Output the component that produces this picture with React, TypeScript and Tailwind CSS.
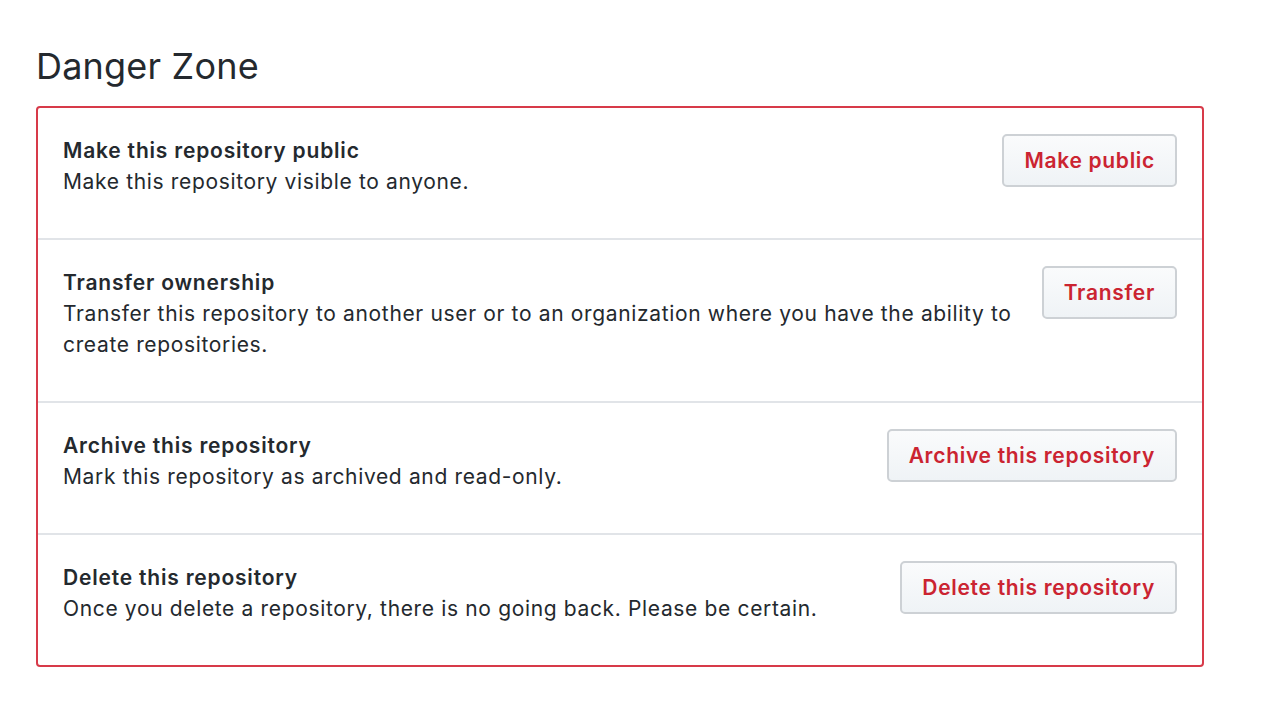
const rows = [
  {
    title: "Make this repository public",
    desc: "Make this repository visible to anyone.",
    button: "Make public",
  },
  {
    title: "Transfer ownership",
    desc: "Transfer this repository to another user or to an organization where you have the ability to create repositories.",
    button: "Transfer",
  },
  {
    title: "Archive this repository",
    desc: "Mark this repository as archived and read-only.",
    button: "Archive this repository",
  },
  {
    title: "Delete this repository",
    desc: "Once you delete a repository, there is no going back. Please be certain.",
    button: "Delete this repository",
  },
]

export default function App() {
  return (
    <div
      className="min-h-screen bg-white pt-[44px] pl-[36px] text-[#24292e]"
      style={{ fontFamily: "Inter, 'Noto Sans', sans-serif" }}
    >
      <h2 className="text-[36px] leading-[45px] font-normal tracking-[0.2px]">Danger Zone</h2>

      <div className="mt-[17px] w-[1168px] rounded-[4px] border-2 border-[#d73a49]">
        {rows.map((row, i) => (
          <div
            key={row.title}
            className={
              "flex items-start px-[25px] pt-[27px] pb-[41px] " +
              (i > 0 ? "border-t-2 border-[#e1e4e8]" : "")
            }
          >
            <div className="flex-1 text-[21px] leading-[31px] tracking-[0.65px]">
              <div className="font-semibold tracking-[0.8px]">{row.title}</div>
              <p>{row.desc}</p>
            </div>
            <button className="ml-[24px] -mt-px h-[53px] shrink-0 rounded-[5px] border-2 border-[#cdd1d5] bg-linear-to-b from-[#fafbfc] to-[#eff3f6] px-[20px] text-[21px] font-semibold tracking-[0.7px] text-[#cb2431]">
              {row.button}
            </button>
          </div>
        ))}
      </div>
    </div>
  )
}
